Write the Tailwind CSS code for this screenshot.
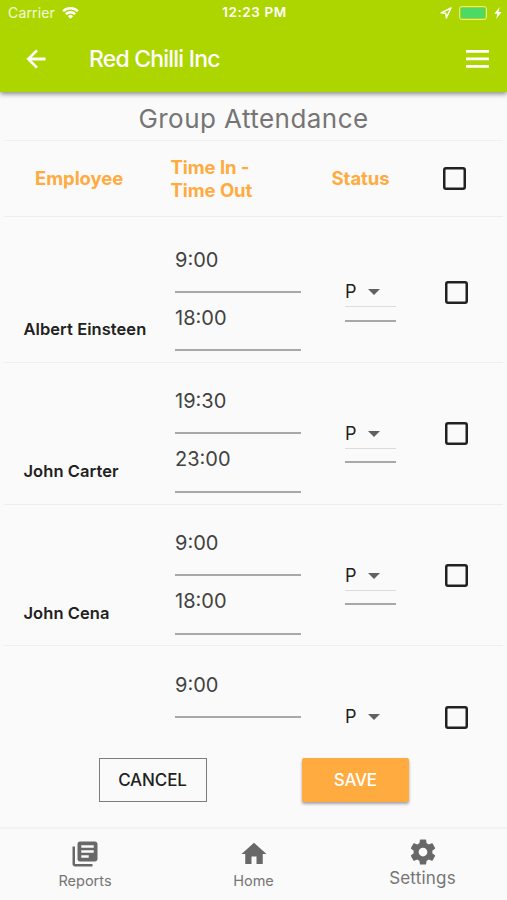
<!DOCTYPE html>
<html lang="en">

  <head>
    <meta charset="UTF-8">
    <meta name="viewport" content="width=device-width, initial-scale=1">
    <title>Group Attendance</title>
    <script src="https://cdn.jsdelivr.net/npm/@tailwindcss/browser@4"></script>
  </head>

  <body class="flex h-[900px] w-[507px] flex-col overflow-hidden bg-[#fafafa] font-['Inter',sans-serif] text-[#212121]">

    <header class="z-10 h-[92px] shrink-0 bg-[#add600] text-white shadow-[0_2px_5px_rgba(0,0,0,0.45)]">
      <!-- status bar -->
      <div class="grid h-[26px] grid-cols-3 items-center pl-2 pr-[5px] text-[14px] leading-none">
        <div class="flex items-center gap-[7px]">
          <span class="tracking-[0.15px] text-white/85">Carrier</span>
          <svg class="h-[12px] w-[17px]" viewBox="0 0 18 13" fill="none" stroke="currentColor" stroke-width="2.6">
            <path d="M1 4.6a11.6 11.6 0 0 1 16 0M3.9 7.8a7.4 7.4 0 0 1 10.2 0" />
            <path d="M9 12.8 6.2 9.9a4 4 0 0 1 5.6 0z" fill="currentColor" stroke="none" />
          </svg>
        </div>
        <span class="pr-[1px] text-center text-[13.5px] font-semibold tracking-[0.55px]">12:23 PM</span>
        <div class="flex items-center justify-end">
          <svg class="h-3 w-3" viewBox="0 0 12 12" fill="none" stroke="currentColor" stroke-width="1.4" stroke-linejoin="round">
            <path d="M11 1 1 5.8l4.8.5.5 4.7z" />
          </svg>
          <span class="ml-[7px] block h-[14px] w-[28px] rounded-[3px] border border-white/60 p-px">
            <span class="block h-full w-full rounded-[1px] bg-[#4cd964]"></span>
          </span>
          <svg class="ml-[7px] h-[12px] w-2" viewBox="0 0 8 12" fill="currentColor">
            <path d="M5.6 0 .4 6.8h2.9L2.2 12l5.4-7H4.6z" />
          </svg>
        </div>
      </div>
      <!-- toolbar -->
      <div class="flex h-[66px] items-center pl-[22px] pr-[18px]">
        <svg class="size-[28px]" viewBox="0 0 24 24" fill="currentColor" stroke="currentColor" stroke-width=".4">
          <path d="M20 11H7.83l5.59-5.59L12 4l-8 8 8 8 1.41-1.41L7.83 13H20v-2z" />
        </svg>
        <h1 class="ml-[39px] text-[23px] font-medium tracking-[-0.8px]">Red Chilli Inc</h1>
        <svg class="ml-auto h-[18px] w-[23px]" viewBox="0 0 23 18" fill="currentColor">
          <path d="M0 0h23v2.8H0zM0 7.5h23v2.8H0zM0 15h23v2.8H0z" />
        </svg>
      </div>
    </header>

    <h2 class="mx-1 flex h-[49px] shrink-0 items-center justify-center border-b border-[#f0f0f0] pt-[5px] text-[26px] tracking-[0.45px] text-[#757575]">Group Attendance</h2>

    <div class="mx-1 flex h-[76px] shrink-0 items-center border-b border-[#eeeeee] text-[18.5px] leading-[23px] font-bold tracking-[-0.05px] text-[#ffab40]">
      <span class="w-[136px] pl-[31px]">Employee</span>
      <span class="w-[160px] pl-[30.5px]">Time In -<br>Time Out</span>
      <span class="w-[139px] pl-[31.5px]">Status</span>
      <svg class="ml-1 size-[23px]" viewBox="0 0 23 23" fill="none" stroke="#212121" stroke-width="2.5">
        <rect x="1.25" y="1.25" width="20.5" height="20.5" rx="1.7" />
      </svg>
    </div>

    <main id="rows" class="mx-1 h-[513px] shrink-0 overflow-hidden pt-[4px]"></main>

    <div class="z-10 flex h-[97px] shrink-0 gap-[95px] bg-[#fafafa] pt-[28px] pl-[98.5px] text-[17px] font-medium">
      <button class="h-[44px] w-[108px] border border-[#7d7d7d] pt-px tracking-[-0.1px] text-[#212121]">CANCEL</button>
      <button class="h-[44px] w-[107.5px] rounded-[2px] bg-[#ffab40] pt-px tracking-[-0.3px] text-white shadow-[0_2px_3px_rgba(0,0,0,0.35)]">SAVE</button>
    </div>

    <nav class="grid flex-1 grid-cols-3 border-t-2 border-[#f3f3f3] text-[14.5px] leading-none text-[#757575]">
      <div class="flex flex-col items-center pt-[10px] pl-px">
        <svg class="size-[30px]" viewBox="0 0 24 24" fill="#686868">
          <path d="M4 6H2v14c0 1.1.9 2 2 2h14v-2H4V6zm16-4H8c-1.1 0-2 .9-2 2v12c0 1.1.9 2 2 2h12c1.1 0 2-.9 2-2V4c0-1.1-.9-2-2-2zm-1 9H9V9h10v2zm-4 4H9v-2h6v2zm4-8H9V5h10v2z" />
        </svg>
        <span class="mt-[5px]">Reports</span>
      </div>
      <div class="flex flex-col items-center pt-[10px]">
        <svg class="size-[30px]" viewBox="0 0 24 24" fill="#686868">
          <path d="M10 20v-6h4v6h5v-8h3L12 3 2 12h3v8z" />
        </svg>
        <span class="mt-[5px]">Home</span>
      </div>
      <div class="flex flex-col items-center pt-[8px] text-[17px]">
        <svg class="size-[30px]" viewBox="0 0 24 24" fill="#686868">
          <path d="M19.43 12.98c.04-.32.07-.64.07-.98s-.03-.66-.07-.98l2.11-1.65c.19-.15.24-.42.12-.64l-2-3.46c-.12-.22-.39-.3-.61-.22l-2.49 1c-.52-.4-1.08-.73-1.69-.98l-.38-2.65C14.46 2.18 14.25 2 14 2h-4c-.25 0-.46.18-.49.42l-.38 2.65c-.61.25-1.17.59-1.69.98l-2.49-1c-.23-.09-.49 0-.61.22l-2 3.46c-.13.22-.07.49.12.64l2.11 1.65c-.04.32-.07.65-.07.98s.03.66.07.98l-2.11 1.65c-.19.15-.24.42-.12.64l2 3.46c.12.22.39.3.61.22l2.49-1c.52.4 1.08.73 1.69.98l.38 2.65c.03.24.24.42.49.42h4c.25 0 .46-.18.49-.42l.38-2.65c.61-.25 1.17-.59 1.69-.98l2.49 1c.23.09.49 0 .61-.22l2-3.46c.12-.22.07-.49-.12-.64l-2.11-1.65zM12 15.5c-1.93 0-3.5-1.57-3.5-3.5s1.57-3.5 3.5-3.5 3.5 1.57 3.5 3.5-1.57 3.5-3.5 3.5z" />
        </svg>
        <span class="mt-[3px] tracking-[0.2px]">Settings</span>
      </div>
    </nav>

    <template id="row">
      <section class="flex h-[141.75px] border-b border-[#eeeeee]">
        <b data-name class="w-[171px] pt-[98px] pl-[19.5px] text-[16.5px] leading-5 font-semibold tracking-[0.06px] whitespace-nowrap"></b>
        <div class="w-[126px] text-[20px] leading-6 text-[#424242]">
          <div data-in class="h-[71.5px] border-b-2 border-[#a8a8a8] pt-[26.5px]"></div>
          <div data-out class="h-[58.5px] border-b-2 border-[#a8a8a8] pt-[13px]"></div>
        </div>
        <div class="ml-[44px] w-[51px] text-[18px] leading-6">
          <div class="flex h-[86px] items-center border-b border-[#dcdcdc] pt-[57px]">
            <span>P</span>
            <svg class="ml-[11px] h-[6px] w-3" viewBox="0 0 12 6" fill="#616161"><path d="M0 0h12L6 6z" /></svg>
          </div>
          <div class="h-[14.5px] border-b-2 border-[#a8a8a8]"></div>
        </div>
        <svg class="mt-[59.5px] ml-[48.5px] size-[23px]" viewBox="0 0 23 23" fill="none" stroke="#212121" stroke-width="2.5">
          <rect x="1.25" y="1.25" width="20.5" height="20.5" rx="1.7" />
        </svg>
      </section>
    </template>

    <script>
      const people = [
        ["Albert Einsteen", "9:00", "18:00"],
        ["John Carter", "19:30", "23:00"],
        ["John Cena", "9:00", "18:00"],
        ["", "9:00", ""],
      ];
      const rows = document.getElementById("rows");
      for (const [name, time_in, time_out] of people) {
        const row = document.getElementById("row").content.cloneNode(true);
        row.querySelector("[data-name]").textContent = name;
        row.querySelector("[data-in]").textContent = time_in;
        row.querySelector("[data-out]").textContent = time_out;
        rows.append(row);
      }
    </script>
  </body>

</html>
